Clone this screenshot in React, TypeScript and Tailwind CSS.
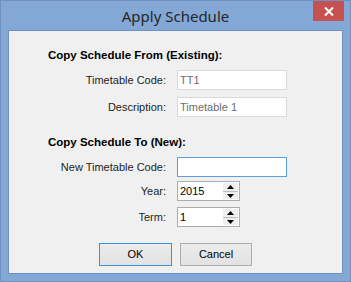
import { ReactNode } from 'react'

const labelFont = { fontFamily: '"Liberation Sans", Arial, sans-serif' }

function Row({ label, children, className = '' }: { label: string; children: ReactNode; className?: string }) {
  return (
    <div className={`flex items-center h-[20px] ${className}`}>
      <div className="w-[168px] text-right pr-[11px] text-[11px] text-[#1e1e1e]">{label}</div>
      {children}
    </div>
  )
}

function TextBox({ value, disabled, focused }: { value: string; disabled?: boolean; focused?: boolean }) {
  const border = focused ? 'border-[#5b9fe0]' : 'border-[#d9d9d9]'
  const text = disabled ? 'text-[#6d6d6d]' : 'text-black'
  return (
    <div className={`w-[110px] h-[20px] bg-white border ${border} ${text} text-[11px] px-[2px] flex items-center`}>
      {value}
    </div>
  )
}

function Spinner({ value }: { value: string }) {
  return (
    <div className="w-[63px] h-[20px] bg-white border border-[#abadb3] flex text-[11px] text-black">
      <div className="flex-1 flex items-center px-[2px]">{value}</div>
      <div className="w-[15px] flex flex-col mr-[1px] my-[1px]">
        <div className="h-[8px] bg-[#eeeeee] flex items-center justify-center">
          <svg width="7" height="4" viewBox="0 0 7 4"><path d="M0 4L3.5 0L7 4Z" fill="#000" /></svg>
        </div>
        <div className="h-[2px] bg-[#bdbdbd]" />
        <div className="h-[7px] bg-[#eeeeee] flex items-center justify-center">
          <svg width="7" height="4" viewBox="0 0 7 4"><path d="M0 0L3.5 4L7 0Z" fill="#000" /></svg>
        </div>
      </div>
    </div>
  )
}

export default function App() {
  return (
    <div className="w-[351px] h-[282px] bg-[#83a8d5] border border-[#6e91bf] flex flex-col" style={labelFont}>
      <div className="h-[29px] relative flex items-center justify-center">
        <span className="text-[15px] text-[#262626] mt-[1px]" style={{ fontFamily: '"Noto Sans", "Open Sans", sans-serif' }}>
          Apply Schedule
        </span>
        <div className="absolute top-0 right-[6px] w-[31px] h-[20px] bg-[#c75050] flex items-center justify-center">
          <svg width="10" height="9" viewBox="0 0 10 9">
            <path d="M1 0.5L9 8.5M9 0.5L1 8.5" stroke="#fff" strokeWidth="2" />
          </svg>
        </div>
      </div>
      <div className="mx-[7px] h-[244px] bg-[#f0f0f0] border border-[#6e91bf] flex flex-col">
        <div className="ml-[39px] mt-[17px] h-[14px] leading-[14px] text-[11.5px] font-bold text-black">
          Copy Schedule From (Existing):
        </div>
        <Row label="Timetable Code:" className="mt-[8px]">
          <TextBox value="TT1" disabled />
        </Row>
        <Row label="Description:" className="mt-[7px]">
          <TextBox value="Timetable 1" disabled />
        </Row>
        <div className="ml-[39px] mt-[18px] h-[14px] leading-[14px] text-[11.5px] font-bold text-black">
          Copy Schedule To (New):
        </div>
        <Row label="New Timetable Code:" className="mt-[8px]">
          <TextBox value="" focused />
        </Row>
        <Row label="Year:" className="mt-[4px]">
          <Spinner value="2015" />
        </Row>
        <Row label="Term:" className="mt-[6px]">
          <Spinner value="1" />
        </Row>
        <div className="flex justify-center gap-[8px] mt-[16px]">
          <button className="w-[73px] h-[23px] border border-[#3c90dc] bg-gradient-to-b from-[#ececec] to-[#e2e2e2] text-[11px] text-black">OK</button>
          <button className="w-[72px] h-[23px] border border-[#adadad] bg-gradient-to-b from-[#ececec] to-[#e2e2e2] text-[11px] text-black">Cancel</button>
        </div>
      </div>
    </div>
  )
}
